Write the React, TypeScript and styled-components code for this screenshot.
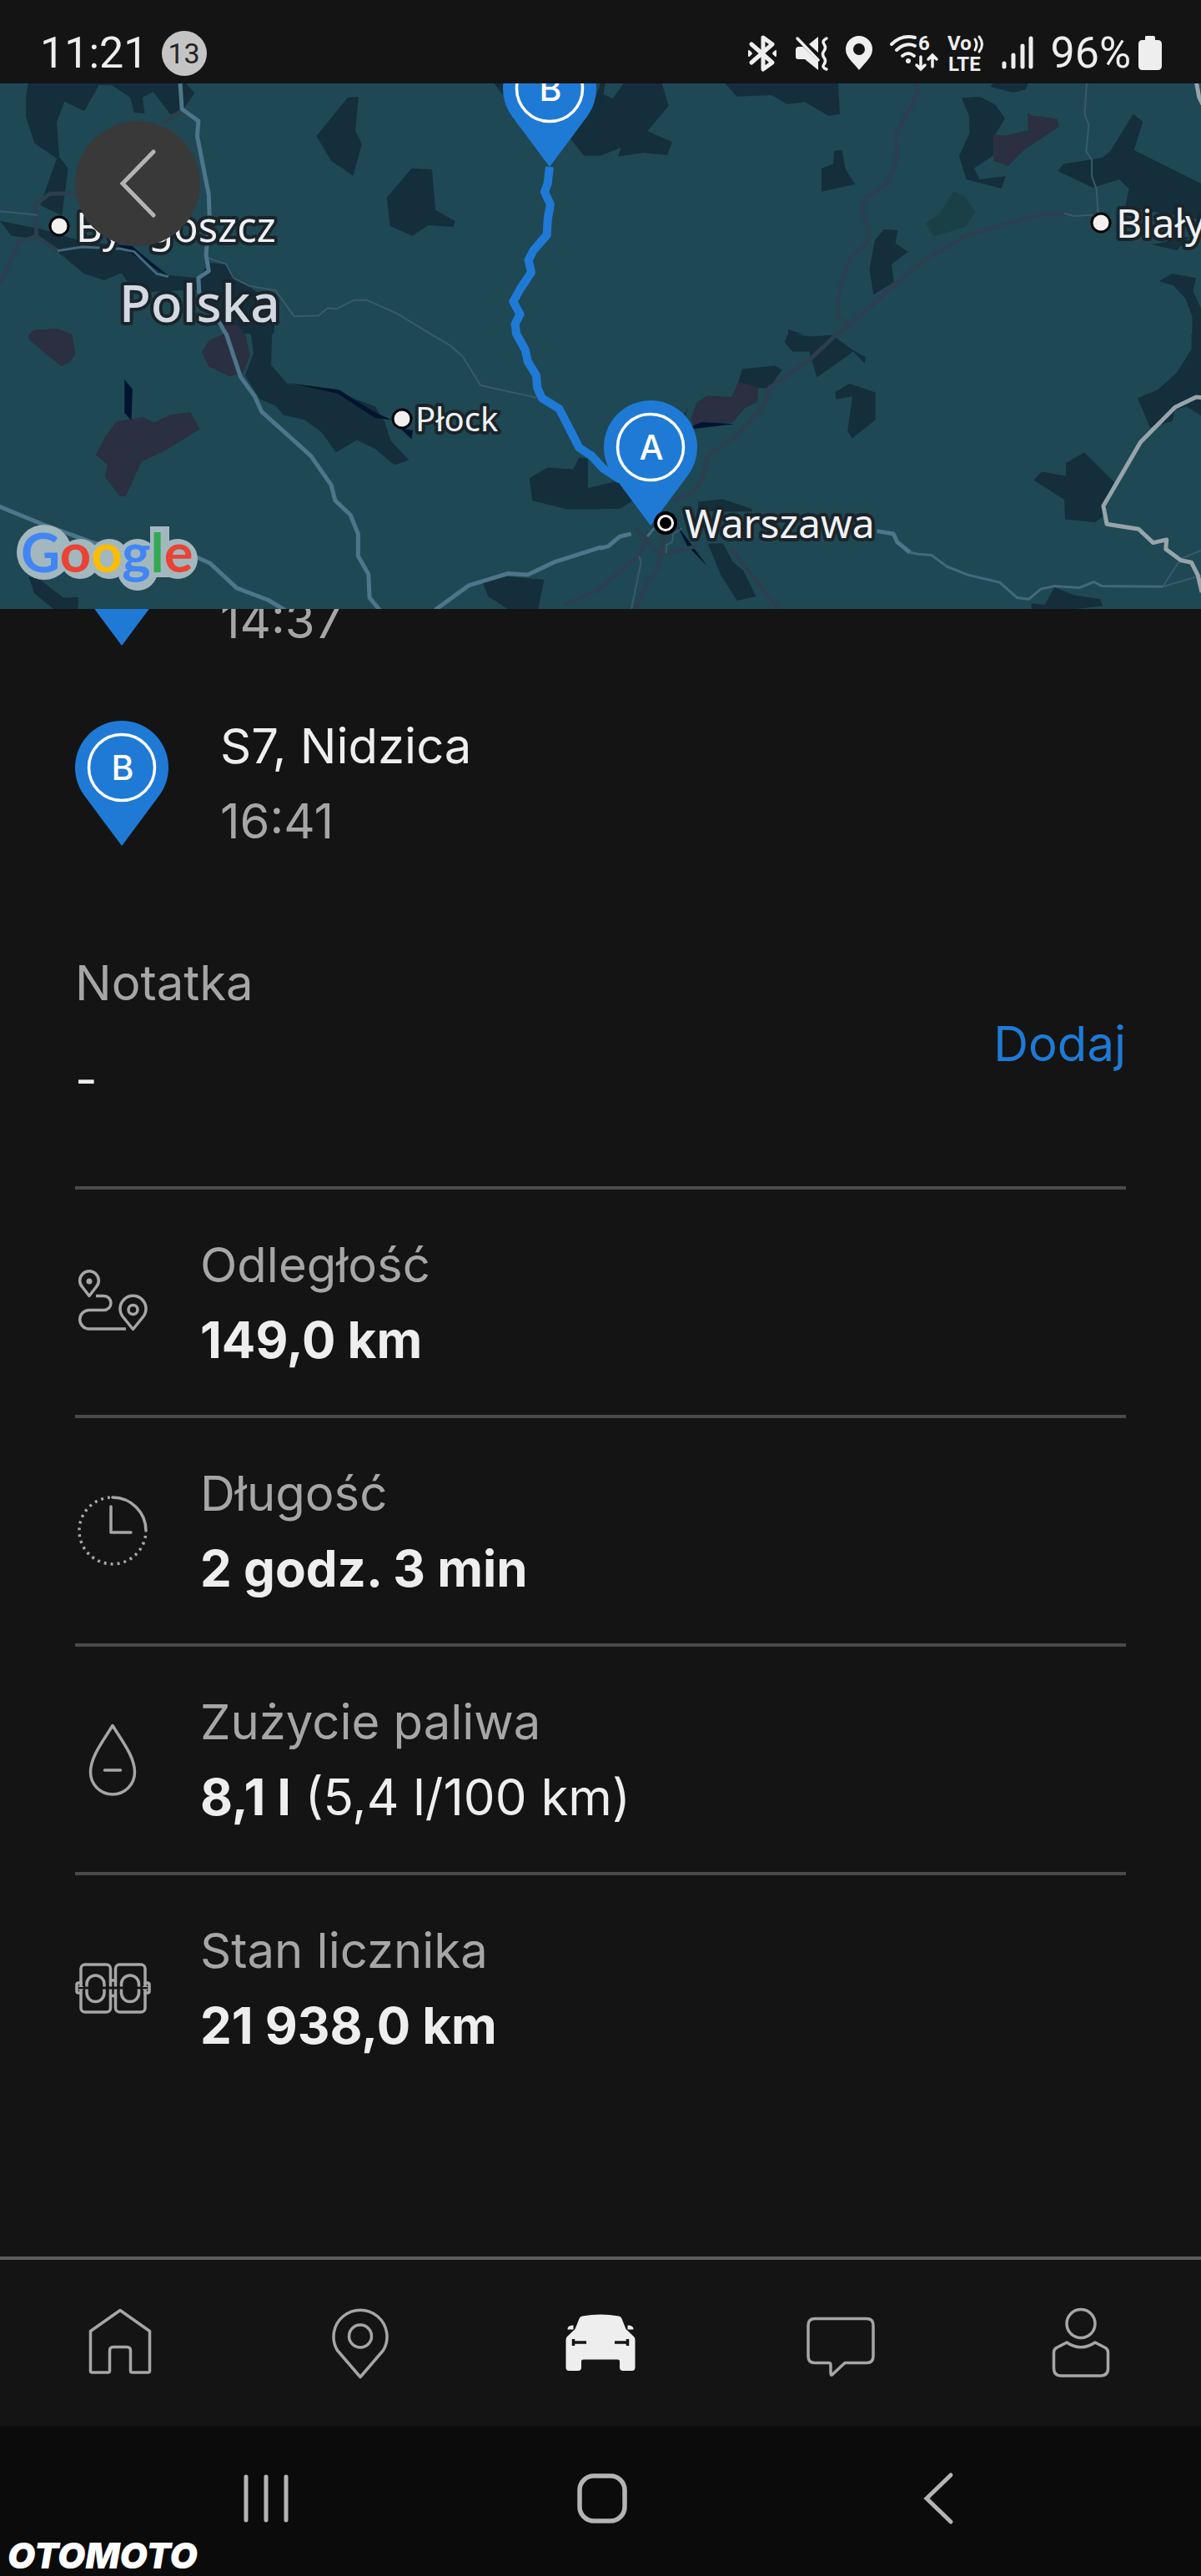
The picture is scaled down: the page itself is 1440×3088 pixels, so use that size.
import React from 'react';
import styled, { createGlobalStyle } from 'styled-components';

const color = {
  page: '#141414',
  system: '#0b0b0b',
  text: '#eeeeee',
  muted: '#a6a6a6',
  line: '#4a4a4a',
  navLine: '#5c5c5c',
  blue: '#1f7ad6',
  land: '#1f4855',
  forest: '#142e3b',
  park: '#1a4047',
  town: '#2a2f42',
  water: '#02142f',
  river: '#4d768b',
  road: '#3a5a6b',
  highway: '#2b3f4f',
  border: '#98a4aa',
};

const GlobalStyle = createGlobalStyle`
  *, *::before, *::after { box-sizing: border-box; }
  body { margin: 0; background: ${color.page}; }
  button { font: inherit; color: inherit; background: none; border: 0; padding: 0; cursor: pointer; }
  svg { display: block; flex: none; overflow: visible; }
`;

const Screen = styled.div`
  position: relative;
  display: flex;
  flex-direction: column;
  min-height: 100vh;
  background: ${color.page};
  color: ${color.text};
  font-family: Inter, 'Liberation Sans', sans-serif;
  font-size: 58px;
  line-height: 90px;
  overflow: hidden;
`;

const StatusBar = styled.header`
  display: flex;
  justify-content: space-between;
  align-items: center;
  height: 100px;
  padding: 28px 47px 0 48px;
  font-family: Roboto, 'Liberation Sans', sans-serif;
  font-size: 52px;
  line-height: 60px;
  position: relative;
  z-index: 1;
  background: ${color.page};
`;

const StatusGroup = styled.div<{ $gap: number }>`
  display: flex;
  align-items: center;
  gap: ${(p) => p.$gap}px;
`;

const Badge = styled.span`
  display: flex;
  align-items: center;
  justify-content: center;
  width: 54px;
  height: 54px;
  border-radius: 50%;
  background: #c4c4c4;
  color: #242424;
  font-size: 34px;
  line-height: 40px;
`;

const MapArea = styled.section`
  position: relative;
  z-index: 1;
  height: 630px;
  background: ${color.land};
  overflow: hidden;
`;

const BackButton = styled.button`
  position: absolute;
  left: 90px;
  top: 45px;
  display: grid;
  place-items: center;
  width: 150px;
  height: 150px;
  border-radius: 50%;
  background: #393939;
`;

const Content = styled.main`
  flex: 1;
  padding: 0 90px 187px;
`;

/* The list has been scrolled, so its first stop is partly under the map. */
const Stops = styled.ul`
  list-style: none;
  margin: -121px 0 0;
  padding: 0;
  display: flex;
  flex-direction: column;
  gap: 60px;
`;

const Stop = styled.li`
  display: flex;
  align-items: center;
  gap: 62px;
  height: 180px;
`;

const StopText = styled.div`
  align-self: flex-end;
  display: flex;
  flex-direction: column;
`;

const Muted = styled.span`
  color: ${color.muted};
`;

const Note = styled.section`
  display: flex;
  justify-content: space-between;
  align-items: center;
  padding: 104px 0 83px;
`;

const NoteText = styled.div`
  display: flex;
  flex-direction: column;
  gap: 26px;
`;

const AddButton = styled.button`
  && { color: ${color.blue}; }
  padding-top: 30px;
`;

const Details = styled.dl`
  margin: 0;
`;

const Detail = styled.div`
  display: flex;
  align-items: center;
  gap: 60px;
  padding: 45px 0;
  border-top: 4px solid ${color.line};
  color: ${color.muted};
`;

const Value = styled.dd`
  margin: 0;
  color: ${color.text};
  font-size: 60px;
`;

const Strong = styled.strong`
  font-weight: 700;
`;

const TabBar = styled.nav`
  display: grid;
  grid-template-columns: repeat(5, 1fr);
  height: 203px;
  border-top: 4px solid ${color.navLine};
`;

const Tab = styled.a<{ $active?: boolean }>`
  display: grid;
  place-items: center;
  color: ${(p) => (p.$active ? color.text : color.muted)};
`;

const SystemBar = styled.footer`
  display: grid;
  grid-template-columns: repeat(3, 1fr);
  height: 180px;
  padding: 0 114px 6px 118px;
  background: ${color.system};
  color: #b4b4b4;
`;

const SystemButton = styled.button`
  display: grid;
  place-items: center;
`;

const Watermark = styled.span`
  position: absolute;
  left: 9px;
  bottom: 0;
  color: #ffffff;
  font: italic 900 43px/50px Inter, 'Liberation Sans', sans-serif;
`;

/* ---------- drawings ---------- */

const PinShape = ({ letter }: { letter: string }) => (
  <>
    <path d="M56 150 11 89.4A56 56 0 1 1 101 89.4Z" fill={color.blue} />
    <circle cx="56" cy="56" r="39.5" fill="none" stroke="#fff" strokeWidth="3.5" />
    <text x="57" y="71" textAnchor="middle" fill="#fff" fontFamily="Inter, sans-serif" fontSize="41" fontWeight="500">
      {letter}
    </text>
  </>
);

const Pin = ({ letter }: { letter: string }) => (
  <svg width="112" height="150" viewBox="0 0 112 150">
    <PinShape letter={letter} />
  </svg>
);

type Kind = 'forest' | 'town' | 'water' | 'park';
type Line = 'river' | 'stream' | 'road' | 'highway' | 'border' | 'route';
interface Tile {
  x: number;
  y: number;
  areas: [Kind, string][];
  lines: [Line, string][];
}

const lineStyle: Record<Line, { stroke: string; width: number }> = {
  river: { stroke: color.river, width: 5 },
  stream: { stroke: '#44687c', width: 3 },
  road: { stroke: color.road, width: 2 },
  highway: { stroke: color.highway, width: 5 },
  border: { stroke: color.border, width: 5 },
  route: { stroke: color.blue, width: 10 },
};

const tiles: Tile[] = [
  {
    x: 0,
    y: 0,
    areas: [
      ['forest', '75,290 262,290 255,315 220,400 168,365 148,440 155,565 178,605 162,775 105,738 148,570 90,515 68,420 68,340'],
      ['forest', '255,290 255,305 290,305 340,350 350,405 378,408 372,350 400,330 445,412 480,390 508,335 480,290'],
      ['forest', '908,350 936,348 928,470 945,518 922,632 865,578 826,490'],
      ['forest', '1075,605 1128,610 1137,755 1188,795 1184,816 1118,810 1077,848 1018,812 1010,710'],
      ['forest', '0,795 110,825 220,870 340,885 440,990 520,1000 545,945 590,950 620,1010 650,1030 720,1100 715,1200 590,1200 560,1160 520,1040 400,1050 330,1010 318,982 272,1007 220,985 150,905 105,860 30,848'],
      ['forest', '1290,300 1315,345 1315,300'],
      ['forest', '1490,500 1525,560 1569,560 1569,300 1540,400'],
      ['town', '75,1202 90,1186 150,1182 188,1202'],
      ['town', '570,1160 620,1170 640,1202 585,1202'],
      ['water', '305,880 345,885 440,995 370,935'],
    ],
    lines: [
      ['highway', '200,695 130,697 92,735 95,850 50,870 0,1020'],
      ['highway', '95,850 150,902'],
      ['highway', '480,395 425,442'],
      ['road', '0,760 98,773'],
      ['stream', '150,902 215,888 315,895 350,905 410,985 440,995'],
      ['road', '538,925 590,950 610,1000 650,1028 720,1045 768,1138 832,1135 856,1108 878,1111 925,1079 958,1079 1040,1130 1125,1202'],
      ['river', '470,290 475,392 518,435 515,490 545,700 547,780 538,915 545,975 518,1000 520,1050 575,1165 590,1202'],
    ],
  },
  {
    x: 1568,
    y: 0,
    areas: [
      ['forest', '-1,300 12,300 8,340 32,355 65,290 158,290 178,380 123,472 187,510 174,558 110,550 46,563 54,530 -1,560'],
      ['forest', '320,290 620,290 625,410 595,417 533,366 487,375 447,342 355,347'],
      ['forest', '1018,312 1030,290 1120,290 1110,322 1078,333'],
      ['forest', '943,352 990,348 1030,375 1056,425 1030,485 1025,560 975,605 990,645 1058,634 1047,678 955,645 936,562 963,480 963,420'],
      ['forest', '610,543 630,540 640,610 665,663 577,689 577,605 608,590'],
      ['forest', '740,825 776,828 770,875 803,905 760,950 766,1015 713,1060 702,968 716,865'],
      ['forest', '1391,410 1416,437 1393,540 1568,660 1568,790 1370,745 1380,680 1355,645 1285,675 1194,615 1208,590 1310,567 1330,545'],
      ['forest', '1440,880 1540,850 1505,900'],
      ['forest', '1458,1012 1492,984 1555,1000 1547,1045 1568,1110 1568,1202 1545,1202 1545,1140 1528,1075 1495,1025'],
      ['forest', '490,1185 530,1202 490,1202'],
      ['town', '1025,485 1060,487 1117,468 1115,405 1125,415 1192,427 1197,455 1105,540 1065,597 1027,580'],
      ['park', '922,687 950,705 978,760 955,815 870,850 848,802 885,770'],
    ],
    lines: [
      ['highway', '825,290 827,340 770,485 776,560 765,610 745,665 690,715 680,745 700,825 697,870 655,925 635,985 620,1080 620,1140 650,1170'],
      ['highway', '1220,770 1150,770 960,845 850,930 800,985 650,1170 620,1202'],
      ['road', '1270,290 1264,410 1275,450 1268,545 1283,575 1283,635 1295,680 1299,765'],
      ['road', '1210,767 1235,777 1300,772'],
      ['border', '1555,290 1563,350 1572,375'],
    ],
  },
  {
    x: 0,
    y: 1200,
    areas: [
      ['town', '75,0 188,0 197,75 180,105 160,117 130,85 75,20'],
      ['town', '585,0 640,0 653,80 635,140 600,155 545,118 527,68 545,25'],
      ['forest', '655,0 710,0 708,112 750,180 887,215 980,262 1005,320 1020,385 1068,455 1030,473 980,415 932,383 877,427 840,355 795,310 740,293 720,260 678,235 640,150 662,70'],
      ['water', '750,177 885,202 975,280 1022,310 980,303 880,215'],
      ['water', '1045,340 1078,348 1075,380'],
      ['town', '305,315 375,300 402,320 445,292 497,282 522,344 430,422 370,460 328,585 313,585 274,515 280,470 250,437 275,370'],
      ['water', '325,165 346,200 343,312 325,285'],
      ['forest', '1430,482 1497,488 1512,445 1535,450 1535,555 1569,545 1569,632 1480,632 1390,600 1382,520'],
      ['forest', '1260,895 1325,873 1421,885 1405,990 1325,990 1275,945'],
      ['forest', '75,875 100,880 165,950 205,948 203,990 140,990 90,935'],
    ],
    lines: [
      ['highway', '1475,975 1570,915'],
      ['road', '1120,-2 1175,42 1208,82 1255,186 1400,230'],
      ['river', '590,-2 628,155 665,225 683,280 812,440 865,545 875,600 915,652 935,720 935,800 962,865 965,950 992,995'],
      ['river', '-5,620 110,685 250,755 515,805 548,825 618,915 700,958 745,995'],
      ['river', '1135,995 1225,905 1325,863 1378,867 1450,820 1570,768'],
    ],
  },
  {
    x: 1568,
    y: 1200,
    areas: [
      ['forest', '490,0 550,10 605,5 655,55 692,85 690,108 660,65 565,157 545,65 502,65 480,30'],
      ['forest', '370,127 455,115 474,130 440,197 400,195 360,175'],
      ['forest', '650,180 718,212 718,310 657,377 645,350 658,225 615,237 613,210'],
      ['forest', '-1,545 60,525 85,600 50,630 -1,630'],
      ['forest', '255,605 318,595 395,630 395,640 255,640'],
      ['forest', '280,755 320,755 345,820 373,852 406,945 356,960 315,870'],
      ['forest', '1543,0 1568,0 1568,295 1530,262 1500,275 1493,315 1435,338 1402,232 1455,202 1505,140 1543,55'],
      ['forest', '1263,427 1342,535 1310,660 1290,679 1213,668 1211,597 1131,527 1152,497 1215,512 1215,465'],
      ['forest', '1125,970 1160,975 1185,912 1235,940 1305,955 1311,980 1240,990 1125,990'],
      ['town', '360,172 412,195 410,245 375,270 345,320 245,330 235,310 250,250 278,222 342,228'],
      ['water', '235,335 265,318 350,325 245,342'],
      ['water', '230,265 215,310 220,290'],
      ['water', '200,690 225,735 278,836 225,760'],
    ],
    lines: [
      ['highway', '620,-2 545,95 440,195 425,260 350,375 280,440 265,525 240,575 190,600'],
      ['highway', '-2,915 100,800 120,740 90,700'],
      ['highway', '165,720 150,850 120,900 90,995'],
      ['highway', '120,740 150,790 170,790 250,765'],
      ['highway', '340,770 390,860 467,995'],
      ['stream', '140,700 122,730'],
      ['road', '100,800 106,820 80,995'],
      ['road', '213,700 190,720 187,750 172,760 172,790'],
      ['river', '-2,772 20,765 50,730 80,720'],
      ['river', '722,710 765,720 775,750 808,787'],
      ['stream', '808,787 830,793 865,797 905,838 960,868 1043,895 1088,950 1118,955 1150,918 1185,908 1250,914 1288,893 1310,908 1468,910'],
      ['road', '1468,910 1568,870'],
      ['road', '1468,910 1515,810 1568,780'],
      ['border', '1570,230 1555,228 1500,265 1410,390 1313,620 1322,685 1405,703 1443,752 1478,741 1476,775 1515,815 1543,823 1560,870 1570,930'],
    ],
  },
];

const route =
  '1435,600 1430,660 1422,690 1437,735 1430,790 1428,845 1393,900 1380,935 1387,980 1358,1040 1340,1085 1358,1130 1345,1165 1348,1200 1372,1260 1378,1300 1400,1350 1403,1395 1415,1432 1460,1470 1490,1550 1512,1610 1545,1640 1575,1685 1620,1725';

const MapLine = ({ kind, points }: { kind: Line; points: string }) => (
  <polyline
    points={points}
    fill="none"
    stroke={lineStyle[kind].stroke}
    strokeWidth={lineStyle[kind].width}
    strokeLinejoin="round"
    vectorEffect="non-scaling-stroke"
  />
);

const MapLabel = styled.text<{ $size: number; $weight?: number }>`
  font-family: 'Noto Sans', sans-serif;
  font-size: ${(p) => p.$size}px;
  font-weight: ${(p) => p.$weight ?? 400};
  fill: ${(p) => (p.$weight ? '#d3d9e3' : '#eef1f4')};
  stroke: #1b2429;
  stroke-width: 8px;
  stroke-linejoin: round;
  paint-order: stroke;
`;

const LogoText = styled.text`
  font: 700 65px Lato, sans-serif;
`;

const City = ({ x, y }: { x: number; y: number }) => (
  <circle cx={x} cy={y} r="11" fill="#f0f0f0" stroke="#000" strokeWidth="3" />
);

const logoLetters: [string, string][] = [
  ['G', '#4285f4'],
  ['o', '#e94335'],
  ['o', '#fbbc05'],
  ['g', '#4285f4'],
  ['l', '#34a853'],
  ['e', '#e94335'],
];

const RouteMap = () => (
  <svg width="100%" height="100%" viewBox="0 0 1440 630" preserveAspectRatio="xMidYMid slice" role="img" aria-label="Mapa trasy">
    <g transform="translate(0 -100) scale(.4592 .3333)">
      {tiles.map((t) => (
        <g key={`${t.x}-${t.y}`} transform={`translate(${t.x} ${t.y})`}>
          {t.areas.map(([kind, points]) => (
            <polygon key={points} points={points} fill={color[kind]} />
          ))}
          {t.lines.map(([kind, points]) => (
            <MapLine key={points} kind={kind} points={points} />
          ))}
        </g>
      ))}
      <MapLine kind="route" points={route} />
    </g>
    <g transform="translate(603 -50)">
      <PinShape letter="B" />
    </g>
    <g transform="translate(724 380)">
      <PinShape letter="A" />
    </g>
    <City x={71} y={171} />
    <City x={482} y={402} />
    <City x={1320} y={167} />
    <circle cx="798" cy="527" r="14" fill="#000" />
    <circle cx="798" cy="527" r="8.5" fill="#000" stroke="#fff" strokeWidth="3" />
    <MapLabel x={91} y={190} $size={49}>Bydgoszcz</MapLabel>
    <MapLabel x={143} y={286} $size={62} $weight={500}>Polska</MapLabel>
    <MapLabel x={498} y={417} $size={40}>Płock</MapLabel>
    <MapLabel x={821} y={545} $size={48}>Warszawa</MapLabel>
    <MapLabel x={1338} y={185} $size={48}>Biały</MapLabel>
    {/* pale outline behind the logo */}
    <g fill="#a3b8be">
      <circle cx="53" cy="562" r="33" />
      <circle cx="96" cy="570" r="24" />
      <circle cx="131" cy="570" r="24" />
      <rect x="141" y="546" width="48" height="62" rx="24" />
      <rect x="180" y="531" width="23" height="61" />
      <circle cx="213" cy="570" r="24" />
    </g>
    <LogoText x={25} y={586}>
      {logoLetters.map(([letter, fill], i) => (
        <tspan key={i} fill={fill}>{letter}</tspan>
      ))}
    </LogoText>
  </svg>
);

const Chevron = ({ w, h }: { w: number; h: number }) => (
  <svg width={w} height={h} viewBox={`0 0 ${w} ${h}`} fill="none" stroke="#b4b4b4" strokeWidth="5" strokeLinecap="round">
    <path d={`M${w - 3} 3 4 ${h / 2} ${w - 3} ${h - 3}`} />
  </svg>
);

const LineIcon = ({ children }: { children: React.ReactNode }) => (
  <svg width="90" height="90" viewBox="0 0 90 90" fill="none" stroke="currentColor" strokeWidth="3.5" strokeLinecap="round" strokeLinejoin="round" aria-hidden="true">
    {children}
  </svg>
);

const RouteIcon = () => (
  <LineIcon>
    <path d="M17 37.5 8.5 26.5A11.3 11.3 0 1 1 25.5 26.5Z" />
    <circle cx="17" cy="20" r="3.5" fill="currentColor" stroke="none" />
    <path d="M69.5 77.5 57 62A15.5 15.5 0 1 1 82 62Z" />
    <circle cx="69.5" cy="54" r="5.5" />
    <path d="M25 37.5H34.5A8.5 8.5 0 0 1 34.5 54.5H17A11.2 11.2 0 0 0 17 77H61" strokeLinecap="butt" />
  </LineIcon>
);

const ClockIcon = () => (
  <LineIcon>
    <path d="M45 5A40 40 0 0 1 85 45M43 16V47H67" />
    <path d="M84.5 51A40 40 0 1 1 42 5" strokeDasharray="3 5" strokeLinecap="butt" />
  </LineIcon>
);

const DropIcon = () => (
  <LineIcon>
    <path d="M45 4.5C33 24 18.5 42 18.5 60.5A26.5 26.5 0 0 0 71.5 60.5C71.5 42 57 24 45 4.5ZM35.5 58H54.5" />
  </LineIcon>
);

const OdometerIcon = () => (
  <LineIcon>
    <rect x="7" y="17" width="35.5" height="57" rx="5" />
    <rect x="48.5" y="17" width="35.5" height="57" rx="5" />
    <rect x="14" y="30" width="21" height="31.5" rx="10.5" />
    <rect x="55.5" y="30" width="21" height="31.5" rx="10.5" />
    <path d="M42.5 36H48.5M42.5 54.5H48.5M7 39H4Q2 39 2 41V49Q2 51 4 51H7M84 39H87Q89 39 89 41V49Q89 51 87 51H84" />
    <path d="M4 45H87" stroke={color.page} strokeWidth="3" strokeLinecap="butt" />
    <path d="M4 43.5H10M4 47H10M81 43.5H87M81 47H87" strokeWidth="1" strokeLinecap="butt" />
  </LineIcon>
);

const HomeIcon = () => (
  <LineIcon>
    <path d="M45 5.5 80.5 30.5V78Q80.5 80 78.5 80H59.5Q57.5 80 57.5 78V54Q57.5 49.5 53 49.5H37Q32.5 49.5 32.5 54V78Q32.5 80 30.5 80H11.5Q9.5 80 9.5 78V30.5Z" />
  </LineIcon>
);

const PlaceIcon = () => (
  <LineIcon>
    <path d="M45 85.5 17.5 53.5A32 32 0 1 1 72.5 53.5Z" />
    <circle cx="45" cy="36.5" r="13.5" />
  </LineIcon>
);

const CarIcon = () => (
  <svg width="90" height="90" viewBox="0 0 90 90" fill="currentColor" aria-hidden="true">
    <path d="M23 12.5Q45 8.5 67 12.5Q69.5 13 70.5 15.5L75.5 28 85 37Q86.5 38.5 86.5 41V74Q86.5 78 82.5 78H72Q68 78 68 74V66.5Q68 64.5 65.5 64.5H24.5Q22 64.5 22 66.5V74Q22 78 18 78H7.5Q3.5 78 3.5 74V41Q3.5 38.5 5 37L14.5 28 19.5 15.5Q20.5 13 23 12.5Z" />
    <path d="M5.5 28Q5.5 23.5 12.5 23.5V28.5H5.5ZM84.5 28Q84.5 23.5 77.5 23.5V28.5H84.5Z" />
    <path d="M12.5 40V48M12.5 44H28M77.5 40V48M77.5 44H62" fill="none" stroke={color.page} strokeWidth="3.5" />
  </svg>
);

const ChatIcon = () => (
  <LineIcon>
    <path d="M14 15.5H76Q84 15.5 84 23.5V60.5Q84 68.5 76 68.5H50L35 82.5Q33 84 33 81V71Q33 68.5 30.5 68.5H14Q6 68.5 6 60.5V23.5Q6 15.5 14 15.5Z" />
  </LineIcon>
);

const PersonIcon = () => (
  <LineIcon>
    <circle cx="45" cy="21.5" r="17" />
    <path d="M28 44Q45 55.5 62 44L74.5 50.5Q77.5 52.5 77.5 56V75Q77.5 84 68.5 84H21.5Q12.5 84 12.5 75V56Q12.5 52.5 15.5 50.5Z" />
  </LineIcon>
);

const SmallText = styled.text`
  font: 700 24px Roboto, sans-serif;
`;

const StatusIcons = () => (
  <>
    <svg width="38" height="44" viewBox="0 0 38 44" fill="none" stroke="currentColor" strokeWidth="5" strokeLinejoin="round" strokeLinecap="round" aria-label="Bluetooth">
      <path d="M6 11 31 33 20 41V3L31 11 6 33" />
      <path d="M3 19V25L6 22ZM35 19V25L32 22Z" strokeWidth="2" fill="currentColor" />
    </svg>
    <svg width="40" height="44" viewBox="0 0 40 44" fill="currentColor" aria-label="Wyciszenie">
      <path d="M1 18Q1 14 5 14H10L28 32V42L12 29H4Q1 29 1 26ZM17 11 28 2V21Z" />
      <path d="M3 4 28 30M38 4Q32 7 35 11T35 19 35 27 35 35 38 41" fill="none" stroke="currentColor" strokeWidth="3.5" strokeLinecap="round" />
    </svg>
    <svg width="34" height="44" viewBox="0 0 34 44" fill="currentColor" aria-label="Lokalizacja">
      <path fillRule="evenodd" d="M17 42C8 31 1 26 1 17A16 16 0 0 1 33 17C33 26 26 31 17 42ZM17 10A7 7 0 1 0 17 24 7 7 0 1 0 17 10Z" />
    </svg>
    <StatusGroup $gap={12}>
      <svg width="58" height="44" viewBox="0 0 58 44" fill="none" stroke="currentColor" strokeWidth="4" strokeLinecap="round" aria-label="Wi-Fi">
        <path d="M2 11Q14 -1 30 3M8 18Q19 8 30 13M15 25Q22 19 29 25" />
        <circle cx="22" cy="31" r="3" fill="currentColor" stroke="none" />
        <path d="M37 26V41M32 36 37 41 42 36M51 38V24M46 29 51 24 56 29" strokeWidth="3.5" />
        <SmallText x="34" y="18" fill="currentColor" stroke="none">6</SmallText>
      </svg>
      <svg width="44" height="44" viewBox="0 0 44 44" fill="currentColor">
        <SmallText x="-1" y="18">Vo</SmallText>
        <SmallText x="0" y="43">LTE</SmallText>
        <path d="M32 5Q36 11 32 18M37 2Q44 11 37 20" fill="none" stroke="currentColor" strokeWidth="3" strokeLinecap="round" />
      </svg>
    </StatusGroup>
    <svg width="38" height="44" viewBox="0 0 38 44" stroke="currentColor" strokeWidth="5" strokeLinecap="round" aria-label="Zasięg">
      <path d="M3 34V38M14 24V38M25 13V38M35 4V38" />
    </svg>
    <StatusGroup $gap={9}>
      <span>96%</span>
      <svg width="28" height="44" viewBox="0 0 28 44" fill="currentColor" aria-label="Bateria">
        <path d="M8 2Q8 1 10 1H18Q20 1 20 3V6H23Q28 6 28 11V37Q28 42 23 42H5Q0 42 0 37V11Q0 6 5 6H8Z" />
      </svg>
    </StatusGroup>
  </>
);

/* ---------- data ---------- */

const details = [
  { icon: <RouteIcon />, label: 'Odległość', value: '149,0 km' },
  { icon: <ClockIcon />, label: 'Długość', value: '2 godz. 3 min' },
  { icon: <DropIcon />, label: 'Zużycie paliwa', value: '8,1 l', extra: '(5,4 l/100 km)' },
  { icon: <OdometerIcon />, label: 'Stan licznika', value: '21 938,0 km' },
];

const tabs = [
  { icon: <HomeIcon />, label: 'Start' },
  { icon: <PlaceIcon />, label: 'Mapa' },
  { icon: <CarIcon />, label: 'Samochód', active: true },
  { icon: <ChatIcon />, label: 'Wiadomości' },
  { icon: <PersonIcon />, label: 'Profil' },
];

export default function App() {
  return (
    <Screen>
      <GlobalStyle />
      <StatusBar>
        <StatusGroup $gap={16}>
          <span>11:21</span>
          <Badge>13</Badge>
        </StatusGroup>
        <StatusGroup $gap={20}>
          <StatusIcons />
        </StatusGroup>
      </StatusBar>

      <MapArea>
        <RouteMap />
        <BackButton aria-label="Wstecz">
          <Chevron w={44} h={82} />
        </BackButton>
      </MapArea>

      <Content>
        <Stops>
          <Stop>
            <Pin letter="A" />
            <StopText>
              <Muted>14:37</Muted>
            </StopText>
          </Stop>
          <Stop>
            <Pin letter="B" />
            <StopText>
              <span>S7, Nidzica</span>
              <Muted>16:41</Muted>
            </StopText>
          </Stop>
        </Stops>

        <Note>
          <NoteText>
            <Muted>Notatka</Muted>
            <span>-</span>
          </NoteText>
          <AddButton>Dodaj</AddButton>
        </Note>

        <Details>
          {details.map((d) => (
            <Detail key={d.label}>
              {d.icon}
              <div>
                <dt>{d.label}</dt>
                <Value>
                  <Strong>{d.value}</Strong>
                  {d.extra && ` ${d.extra}`}
                </Value>
              </div>
            </Detail>
          ))}
        </Details>
      </Content>

      <TabBar>
        {tabs.map((t) => (
          <Tab key={t.label} href="#" aria-label={t.label} $active={t.active}>
            {t.icon}
          </Tab>
        ))}
      </TabBar>

      <SystemBar>
        <SystemButton aria-label="Ostatnie">
          <svg width="56" height="62" viewBox="0 0 56 62" stroke="currentColor" strokeWidth="5" strokeLinecap="round">
            <path d="M4 5V57M28 5V57M52 5V57" />
          </svg>
        </SystemButton>
        <SystemButton aria-label="Ekran główny">
          <svg width="62" height="62" viewBox="0 0 62 62" fill="none" stroke="currentColor" strokeWidth="5.5">
            <rect x="4" y="4" width="54" height="54" rx="17" />
          </svg>
        </SystemButton>
        <SystemButton aria-label="Cofnij">
          <Chevron w={36} h={62} />
        </SystemButton>
      </SystemBar>
      <Watermark>OTOMOTO</Watermark>
    </Screen>
  );
}
